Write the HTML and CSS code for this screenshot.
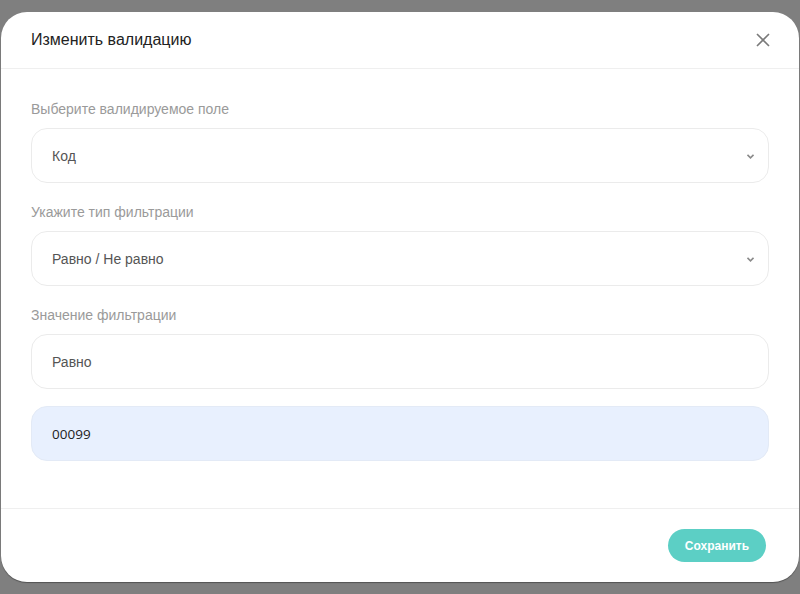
FILE: index.html
```html
<!DOCTYPE html>
<html lang="ru">
<head>
<meta charset="utf-8">
<title>Изменить валидацию</title>
<link rel="stylesheet" href="styles.css">
</head>
<body>
<div class="modal">
  <div class="modal-header">
    <div class="modal-title">Изменить валидацию</div>
    <button class="close" aria-label="Закрыть">
      <svg width="14" height="14" viewBox="0 0 14 14"><path d="M1 1L13 13M13 1L1 13" stroke="#7a7a7a" stroke-width="1.6" fill="none"/></svg>
    </button>
  </div>
  <div class="modal-body">
    <div class="group">
      <div class="label">Выберите валидируемое поле</div>
      <div class="field select"><span>Код</span>
        <svg class="chev" width="7" height="5" viewBox="0 0 7 5"><path d="M0.5 0.8L3.5 3.8L6.5 0.8" stroke="#8a8a8a" stroke-width="1.6" fill="none"/></svg>
      </div>
    </div>
    <div class="group">
      <div class="label">Укажите тип фильтрации</div>
      <div class="field select"><span>Равно / Не равно</span>
        <svg class="chev" width="7" height="5" viewBox="0 0 7 5"><path d="M0.5 0.8L3.5 3.8L6.5 0.8" stroke="#8a8a8a" stroke-width="1.6" fill="none"/></svg>
      </div>
    </div>
    <div class="group last">
      <div class="label">Значение фильтрации</div>
      <div class="field"><span>Равно</span></div>
      <div class="field autofill"><span>00099</span></div>
    </div>
  </div>
  <div class="modal-footer">
    <button class="save">Сохранить</button>
  </div>
</div>
</body>
</html>
```
FILE: styles.css
```css
html, body {
  margin: 0;
  padding: 0;
}
body {
  background: #7f7f7f;
  width: 800px;
  height: 594px;
  overflow: hidden;
  font-family: "Liberation Sans", Arial, sans-serif;
}
.modal {
  margin: 12px 1px 0 1px;
  width: 798px;
  height: 570px;
  background: #fff;
  border-radius: 26px;
  box-shadow: 0 1px 1px rgba(0,0,0,0.35);
  display: flex;
  flex-direction: column;
  overflow: hidden;
}
.modal-header {
  height: 56px;
  border-bottom: 1px solid #efefef;
  display: flex;
  align-items: center;
  justify-content: space-between;
  padding: 0 29px 0 30px;
  flex-shrink: 0;
}
.modal-title {
  font-size: 16px;
  color: #222;
}
.close {
  background: none;
  border: 0;
  padding: 0;
  width: 14px;
  height: 14px;
  display: flex;
  cursor: pointer;
}
.modal-body {
  padding: 32px 30px 0 30px;
  flex: 1;
}
.group {
  margin-bottom: 21px;
}
.label {
  font-size: 14px;
  line-height: 16px;
  color: #9a9a9a;
  margin-bottom: 11px;
}
.field {
  height: 53px;
  border: 1px solid #ebebeb;
  border-radius: 16px;
  display: flex;
  align-items: center;
  justify-content: space-between;
  padding: 0 14px 0 20px;
  font-size: 14px;
  color: #555;
}
.field + .field {
  margin-top: 17px;
}
.autofill {
  background: #e8f0fe;
  border-color: #e3eaf6;
  color: #222;
  font-family: "Open Sans", sans-serif;
  font-size: 13.5px;
}
.chev {
  margin-top: 1px;
}
.modal-footer {
  height: 73px;
  border-top: 1px solid #efefef;
  display: flex;
  align-items: center;
  justify-content: flex-end;
  padding-right: 33px;
  flex-shrink: 0;
}
.save {
  width: 98px;
  height: 33px;
  border: 0;
  border-radius: 17px;
  background: #5ccfc5;
  color: #fff;
  font-family: "Liberation Sans", Arial, sans-serif;
  font-weight: bold;
  font-size: 12px;
  cursor: pointer;
}
```
